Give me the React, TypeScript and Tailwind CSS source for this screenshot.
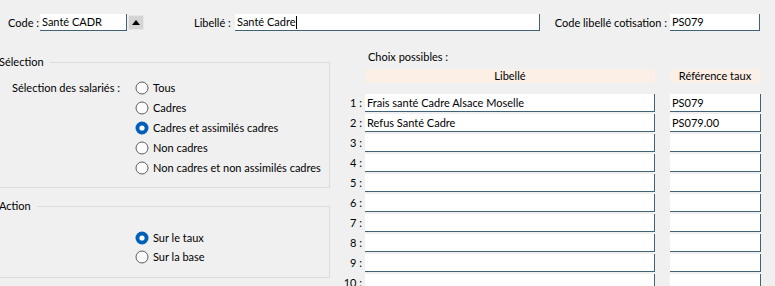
import React from 'react'

const font = { fontFamily: 'Lato, "Liberation Sans", sans-serif' }

function Radio({ checked, label }: { checked?: boolean; label: string }) {
  return (
    <div className="flex items-center h-[20px]">
      <svg width="14" height="14" viewBox="0 0 14 14" className="shrink-0">
        {checked ? (
          <>
            <circle cx="7" cy="7" r="6.5" fill="#005fb8" />
            <circle cx="7" cy="7" r="2.6" fill="#ffffff" />
          </>
        ) : (
          <circle cx="7" cy="7" r="6" fill="#fbfbfb" stroke="#5d5d5d" strokeWidth="1" />
        )}
      </svg>
      <span className="ml-[4px] whitespace-nowrap">{label}</span>
    </div>
  )
}

function Field({ value, className = '', caret }: { value?: string; className?: string; caret?: boolean }) {
  return (
    <div
      className={`h-[17px] bg-white border-b border-r border-[#3f6275] flex items-center pl-[2px] whitespace-nowrap overflow-hidden ${className}`}
    >
      {value}
      {caret && <span className="inline-block w-px h-[13px] bg-black" />}
    </div>
  )
}

function GroupBox({ title, className = '', children }: { title: string; className?: string; children: React.ReactNode }) {
  return (
    <div className={`relative -ml-[2px] w-[332px] border border-[#dcdcdc] ${className}`}>
      <span className="absolute -top-[9px] left-0 bg-[#f0f0f0] pr-[6px] leading-[16px] whitespace-nowrap">{title}</span>
      {children}
    </div>
  )
}

const rows = [
  { label: 'Frais santé Cadre Alsace Moselle', ref: 'PS079' },
  { label: 'Refus Santé Cadre', ref: 'PS079.00' },
  { label: '', ref: '' },
  { label: '', ref: '' },
  { label: '', ref: '' },
  { label: '', ref: '' },
  { label: '', ref: '' },
  { label: '', ref: '' },
  { label: '', ref: '' },
  { label: '', ref: '' },
]

export default function App() {
  return (
    <div
      className="w-[775px] h-[286px] bg-[#f0f0f0] overflow-hidden text-[11px] text-black leading-[14px]"
      style={font}
    >
      {/* top row */}
      <div className="flex items-start pt-[14px] pl-[8px] h-[31px]">
        <div className="w-[32px] h-[17px] flex items-center whitespace-nowrap">Code :</div>
        <Field value="Santé CADR" className="w-[87px]" />
        <button className="ml-px mt-px w-[16px] h-[15px] bg-[#d4d4d4] border border-[#e6e6e6] flex items-center justify-center">
          <svg width="8" height="5" viewBox="0 0 8 5">
            <path d="M4 0 L8 5 L0 5 Z" fill="#000" />
          </svg>
        </button>
        <div className="ml-[50px] w-[41px] h-[17px] flex items-center whitespace-nowrap">Libellé :</div>
        <Field value="Santé Cadre" caret className="w-[305px]" />
        <div className="ml-[16px] w-[114px] h-[17px] flex items-center justify-end pr-[3px] whitespace-nowrap">
          Code libellé cotisation :
        </div>
        <Field value="PS079" className="w-[90px]" />
      </div>

      <div className="flex">
        {/* left column */}
        <div className="w-[330px] shrink-0">
          <GroupBox title="Sélection" className="mt-[31px] h-[126px] pt-[15px]">
            {[
              { label: 'Tous' },
              { label: 'Cadres' },
              { label: 'Cadres et assimilés cadres', checked: true },
              { label: 'Non cadres' },
              { label: 'Non cadres et non assimilés cadres' },
            ].map((r, i) => (
              <div key={r.label} className="flex items-center h-[20px]">
                <div className="w-[136px] pl-[13px] whitespace-nowrap">{i === 0 ? 'Sélection des salariés :' : ''}</div>
                <Radio label={r.label} checked={r.checked} />
              </div>
            ))}
          </GroupBox>

          <GroupBox title="Action" className="mt-[18px] h-[72px] pt-[21px]">
            <div className="pl-[136px]">
              <Radio label="Sur le taux" checked />
              <div className="-mt-px">
                <Radio label="Sur la base" />
              </div>
            </div>
          </GroupBox>
        </div>

        {/* right column */}
        <div className="ml-[13px] pt-[19px]">
          <div className="ml-[25px] h-[14px] whitespace-nowrap">Choix possibles :</div>
          <div className="flex mt-[5px] h-[14px]">
            <div className="ml-[22px] w-[290px] bg-[#fcefe6] flex items-center justify-center">Libellé</div>
            <div className="ml-[15px] w-[90px] bg-[#fcefe6] flex items-center justify-center whitespace-nowrap">Référence taux</div>
          </div>
          <div className="mt-[11px] flex flex-col gap-[2px]">
            {rows.map((r, i) => (
              <div key={i} className="flex items-center h-[18px]">
                <div className="w-[19px] text-right whitespace-nowrap">{i + 1} :</div>
                <div className="ml-[3px] w-[290px] h-[18px] bg-white border-b border-r border-[#3f6275] flex items-center pl-[2px] whitespace-nowrap">
                  {r.label}
                </div>
                <div className="ml-[15px] w-[91px] h-[18px] bg-white border-b border-r border-[#3f6275] flex items-center pl-[2px] whitespace-nowrap">
                  {r.ref}
                </div>
              </div>
            ))}
          </div>
        </div>
      </div>
    </div>
  )
}
